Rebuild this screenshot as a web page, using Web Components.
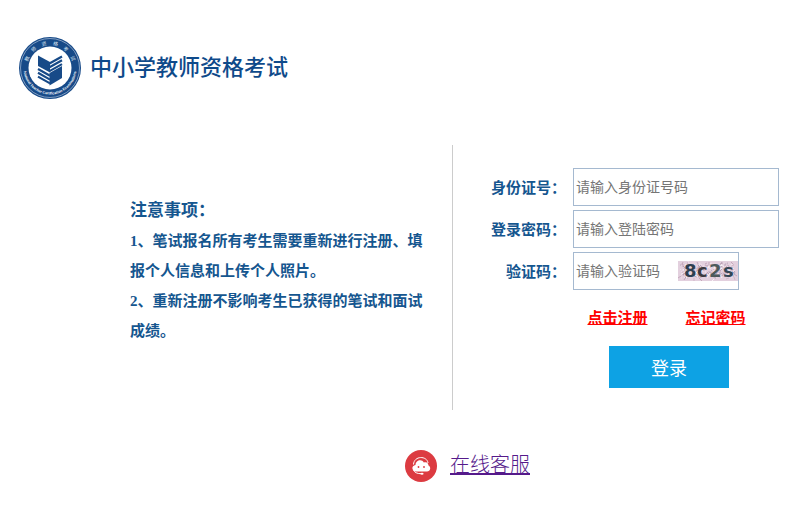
<!DOCTYPE html>
<html lang="zh-CN">
<head>
<meta charset="UTF-8">
<meta name="viewport" content="width=device-width, initial-scale=1">
<title>中小学教师资格考试</title>
<style>
    body {
        margin: 0;
        background: #fff;
        color: #15568f;
        font-family: "Liberation Sans", "Noto Sans CJK SC", sans-serif;
        font-size: 15px;
    }

    main {
        display: flex;
        margin-top: 45px;
    }

    exam-notice {
        flex: 1;
    }

    login-form {
        flex: 0 1 356px;
    }
</style>
</head>
<body>
<site-brand>中小学教师资格考试</site-brand>
<main>
    <exam-notice>
        <span slot="title">注意事项：</span>
        <p>1、笔试报名所有考生需要重新进行注册、填报个人信息和上传个人照片。</p>
        <p>2、重新注册不影响考生已获得的笔试和面试成绩。</p>
    </exam-notice>
    <login-form></login-form>
</main>
<service-link href="#service">在线客服</service-link>

<script>
// Logo and site name
class SiteBrand extends HTMLElement {
    constructor() {
        super();
        this.attachShadow({ mode: 'open' });
    }

    connectedCallback() {
        // Characters spread along the top of the ring
        const ring = [...'教师资格考试'].map((char, i) =>
            `<text x="32" y="9" transform="rotate(${-68 + i * 27} 32 32)">${char}</text>`).join('');

        this.shadowRoot.innerHTML = `
            <style>
                :host {
                    display: flex;
                    align-items: center;
                    gap: 8px;
                    padding: 36px 18px 0;
                }

                svg {
                    width: 64px;
                    height: 64px;
                }

                h1 {
                    margin: 0;
                    color: #0f4a8a;
                    font-size: 22px;
                    font-weight: 500;
                    line-height: 32px;
                }
            </style>
            <svg viewBox="0 0 64 64" role="img" aria-label="National Teacher Certification Examinations">
                <circle cx="32" cy="32" r="31" fill="#174a88"/>
                <circle cx="32" cy="32" r="29.500" fill="none" stroke="#c6d4e6" stroke-width=".6"/>
                <circle cx="32" cy="32" r="21.500" fill="#fff"/>
                <g fill="#dce6f2" font-size="5" text-anchor="middle">${ring}</g>
                <path id="arc" d="M5.500 32A26.500 26.500 0 0 0 58.500 32" fill="none"/>
                <text fill="#fff" font-size="3.600" font-weight="bold" text-anchor="middle">
                    <textPath href="#arc" startOffset="50%">National Teacher Certification Examinations</textPath>
                </text>
                <g fill="#174a88">
                    <path d="M20 19.500L32 26V36.500L20 30Z"/>
                    <path d="M31.500 37L44 30V42L31.500 49.500Z"/>
                </g>
                <g stroke="#174a88" stroke-width="2.200">
                    <path d="M31.500 27.500L44 20.500M31.500 31.300L44 24.300M31.500 35.100L44 28.100"/>
                    <path d="M20 33L32 39.800M20 36.800L32 43.600M20 40.600L32 47.400"/>
                </g>
            </svg>
            <h1><slot></slot></h1>
        `;
    }
}

// Notes shown to the left of the form
class ExamNotice extends HTMLElement {
    constructor() {
        super();
        this.attachShadow({ mode: 'open' });
        this.shadowRoot.innerHTML = `
            <style>
                :host {
                    display: block;
                    padding: 51px 22px 0 130px;
                    font-family: "Liberation Serif", "Noto Sans CJK SC", serif;
                    font-weight: bold;
                    line-height: 30px;
                }

                h2 {
                    margin: 0;
                    font-size: 17px;
                }

                ::slotted(p) {
                    margin: 0;
                }
            </style>
            <h2><slot name="title"></slot></h2>
            <slot></slot>
        `;
    }
}

// Picture with the verification code
class CaptchaImage extends HTMLElement {
    constructor() {
        super();
        this.attachShadow({ mode: 'open' });
    }

    connectedCallback() {
        this.render();
    }

    // Short strokes scattered over the background
    noise() {
        const colors = ['#b797ac', '#fff', '#c9aebf', '#a893aa', '#f7e6f2'];
        let seed = 7;
        const next = max => {
            seed = (seed * 16807) % 2147483647;
            return seed % max;
        };
        let lines = '';
        for (let i = 0; i < 210; i++) {
            const x = 3 + next(55);
            const y = 3 + next(15);
            lines += `<path d="M${x} ${y}l${next(7) - 3} ${next(7) - 3}" stroke="${colors[next(5)]}"/>`;
        }
        return lines;
    }

    render() {
        this.shadowRoot.innerHTML = `
            <style>
                :host {
                    display: block;
                }

                svg {
                    display: block;
                    width: 60px;
                    height: 20px;
                    overflow: visible;
                }
            </style>
            <svg viewBox="0 0 60 20" role="img" aria-label="验证码图片">
                <rect width="60" height="20" fill="#e3d0de"/>
                <g stroke-width=".7">${this.noise()}</g>
                <g font-family="DejaVu Sans, sans-serif" font-size="18" font-weight="bold">
                    <text x="6" y="16" fill="#2d3f50">8</text>
                    <text x="19" y="16" fill="#3c3a41">c</text>
                    <text x="31" y="16" fill="#4d5a5c">2</text>
                    <text x="45" y="16" fill="#344655">s</text>
                </g>
            </svg>
        `;
    }
}

class LoginForm extends HTMLElement {
    constructor() {
        super();
        this.attachShadow({ mode: 'open' });
        this.shadowRoot.innerHTML = `
            <style>
                :host {
                    display: block;
                    box-sizing: border-box;
                    padding: 23px 29px 22px 38px;
                    border-left: 1px solid #ccc;
                }

                .fields {
                    display: grid;
                    grid-template-columns: auto minmax(0, 1fr);
                    align-items: center;
                    gap: 4px 7px;
                }

                label {
                    padding-bottom: 2px;
                    font-weight: bold;
                    text-align: right;
                    white-space: nowrap;
                }

                .box {
                    display: flex;
                    align-items: center;
                    box-sizing: border-box;
                    height: 38px;
                    border: 1px solid #a5b9d0;
                }

                .code {
                    margin-right: 40px;
                }

                input {
                    flex: 1;
                    min-width: 0;
                    height: 100%;
                    box-sizing: border-box;
                    padding: 0 2px;
                    border: 0;
                    background: none;
                    font: inherit;
                    font-size: 14px;
                }

                input::placeholder {
                    color: #757575;
                }

                .links {
                    display: flex;
                    justify-content: center;
                    gap: 38px;
                    margin: 16px 0 16px 63px;
                    line-height: 24px;
                }

                .links a {
                    color: #f00;
                    font-weight: bold;
                }

                button {
                    display: block;
                    width: 120px;
                    height: 42px;
                    margin: 0 50px 0 auto;
                    border: 0;
                    background: #0da2e4;
                    color: #fff;
                    font: inherit;
                    font-size: 18px;
                    cursor: pointer;
                }
            </style>
            <form>
                <div class="fields">
                    <label for="card">身份证号：</label>
                    <div class="box"><input id="card" type="text" placeholder="请输入身份证号码"></div>
                    <label for="password">登录密码：</label>
                    <div class="box"><input id="password" type="password" placeholder="请输入登陆密码"></div>
                    <label for="code">验证码：</label>
                    <div class="box code">
                        <input id="code" type="text" placeholder="请输入验证码">
                        <captcha-image></captcha-image>
                    </div>
                </div>
                <div class="links">
                    <a href="#register">点击注册</a>
                    <a href="#forgot">忘记密码</a>
                </div>
                <button type="submit">登录</button>
            </form>
        `;

        this.shadowRoot.querySelector('form').addEventListener('submit', event => {
            event.preventDefault();
        });
    }
}

// Online support link with its round icon
class ServiceLink extends HTMLElement {
    constructor() {
        super();
        this.attachShadow({ mode: 'open' });
    }

    connectedCallback() {
        const href = this.getAttribute('href') || '#';

        this.shadowRoot.innerHTML = `
            <style>
                :host {
                    display: flex;
                    justify-content: center;
                    align-items: center;
                    gap: 12px;
                    padding: 39px 0 0 126px;
                }

                svg {
                    width: 34px;
                    height: 34px;
                }

                a {
                    padding-bottom: 2px;
                    color: #551a8b;
                    font-size: 20px;
                    font-weight: 300;
                    line-height: 30px;
                }
            </style>
            <svg viewBox="0 0 34 34" aria-hidden="true">
                <circle cx="17" cy="17" r="16" fill="#dc3b41"/>
                <path d="M9.500 15.500C10 6.500 23 6.500 24 14" fill="none" stroke="#fff" stroke-width="1"/>
                <path d="M12.500 22.500C7.500 22.500 7 16.500 11.500 16C11.500 11 18 9.500 19.800 13.500C22.500 12.500 24.500 14 24.300 16.300C27.500 18 26.500 22.500 23 22.500Z" fill="#fff"/>
                <circle cx="14.500" cy="18" r=".9" fill="#dc3b41"/>
                <circle cx="20" cy="18" r=".9" fill="#dc3b41"/>
                <path d="M9.500 21Q11 24.700 17 24.700" fill="none" stroke="#fff" stroke-width="1"/>
                <ellipse cx="18" cy="24.700" rx="1.600" ry="1" fill="#fff"/>
            </svg>
            <a href="${href}"><slot></slot></a>
        `;
    }
}

customElements.define('site-brand', SiteBrand);
customElements.define('exam-notice', ExamNotice);
customElements.define('captcha-image', CaptchaImage);
customElements.define('login-form', LoginForm);
customElements.define('service-link', ServiceLink);
</script>
</body>
</html>
